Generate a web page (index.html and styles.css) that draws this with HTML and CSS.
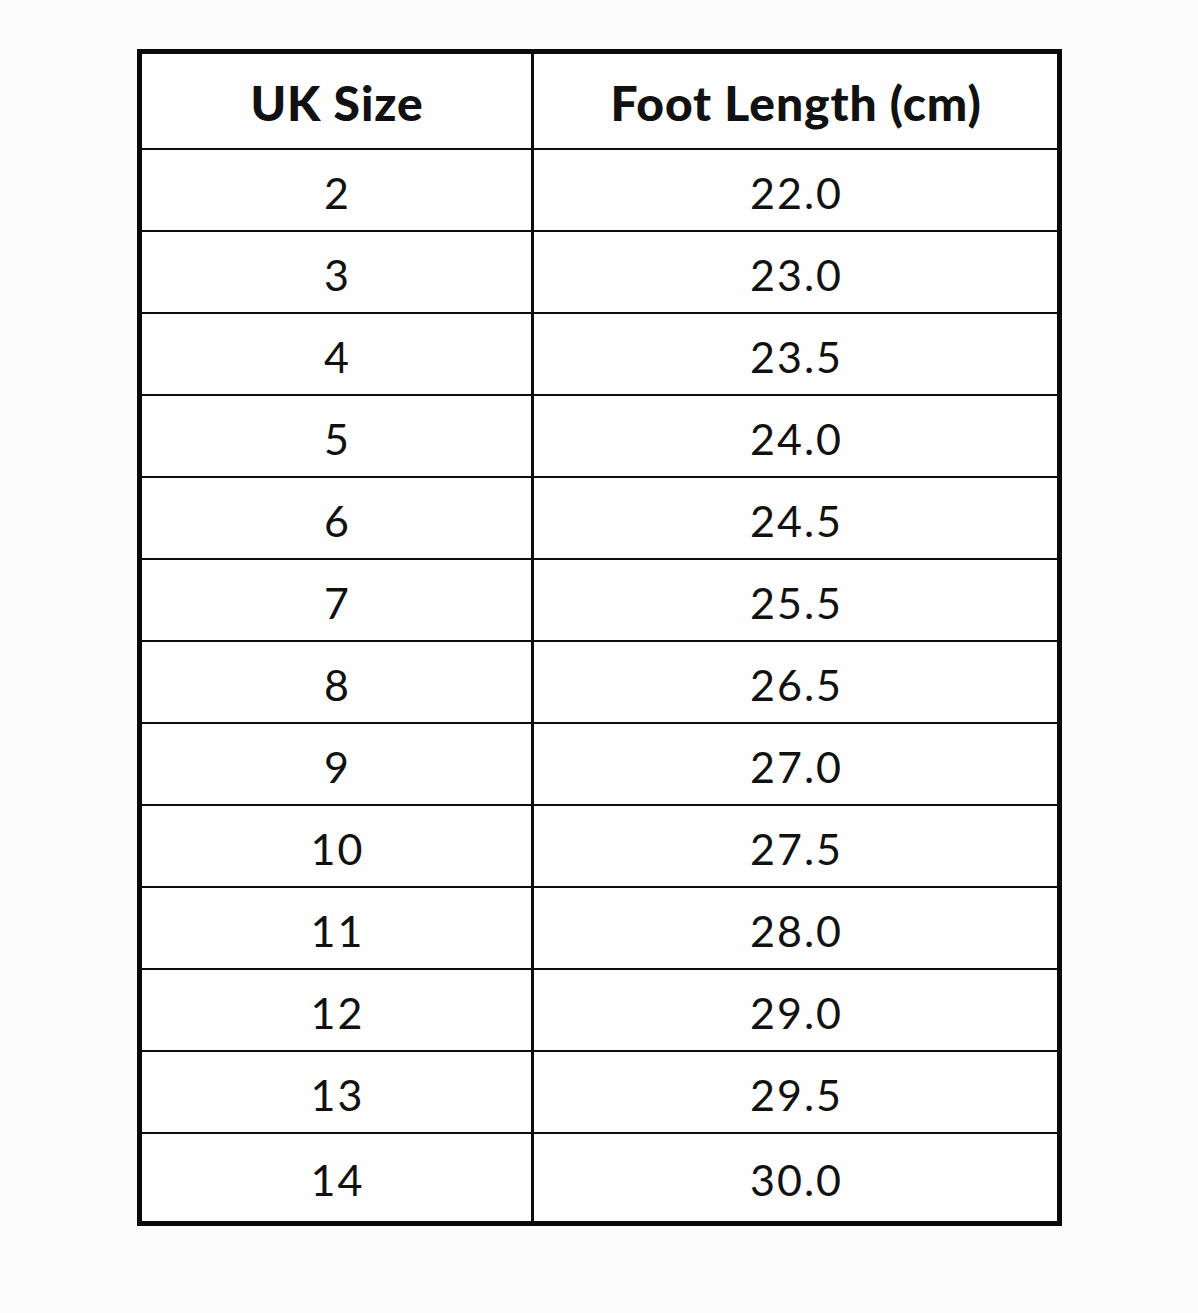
FILE: index.html
```html
<!DOCTYPE html>
<html lang="en">
<head>
<meta charset="utf-8">
<title>UK Size Chart</title>
<link rel="stylesheet" href="styles.css">
</head>
<body>
<div class="chart">
  <div class="cell head">UK Size</div>
  <div class="cell head">Foot Length (cm)</div>
  <div class="cell">2</div><div class="cell">22.0</div>
  <div class="cell">3</div><div class="cell">23.0</div>
  <div class="cell">4</div><div class="cell">23.5</div>
  <div class="cell">5</div><div class="cell">24.0</div>
  <div class="cell">6</div><div class="cell">24.5</div>
  <div class="cell">7</div><div class="cell">25.5</div>
  <div class="cell">8</div><div class="cell">26.5</div>
  <div class="cell">9</div><div class="cell">27.0</div>
  <div class="cell">10</div><div class="cell">27.5</div>
  <div class="cell">11</div><div class="cell">28.0</div>
  <div class="cell">12</div><div class="cell">29.0</div>
  <div class="cell">13</div><div class="cell">29.5</div>
  <div class="cell">14</div><div class="cell">30.0</div>
</div>
</body>
</html>
```

FILE: styles.css
```css
html, body {
  margin: 0;
  padding: 0;
  background: #fbfbfb;
}

body {
  padding: 49px 0 0 137px;
  font-family: "Lato", "Open Sans", sans-serif;
  color: #111;
}

.chart {
  box-sizing: border-box;
  width: 925px;
  display: grid;
  grid-template-columns: 389px 1fr;
  grid-template-rows: 94px repeat(12, 80px) 87px;
  gap: 2px 3px;
  background: #0d0d0d;
  border: 5px solid #0a0a0a;
}

.cell {
  background: #fefefe;
  display: flex;
  align-items: center;
  justify-content: center;
  font-size: 43px;
  font-weight: 400;
  letter-spacing: 2px;
  padding-top: 4px;
  padding-left: 2px;
  box-sizing: border-box;
}

.head {
  font-size: 48px;
  font-weight: 900;
  padding-top: 2px;
  padding-left: 1px;
  letter-spacing: 0.9px;
}
```
